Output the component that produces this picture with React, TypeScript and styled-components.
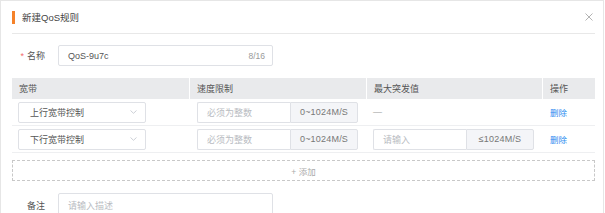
import React from 'react';
import styled, { createGlobalStyle } from 'styled-components';

const GlobalStyle = createGlobalStyle`
  html, body {
    margin: 0;
    padding: 0;
    background: #fff;
  }
  body {
    font-family: "Liberation Sans", "Noto Sans CJK SC", sans-serif;
    font-size: 9px;
    color: #555;
    overflow: hidden;
  }
`;

const Dialog = styled.div`
  width: 602px;
  height: 212px;
  overflow: hidden;
  border: 1px solid #e6e6e6;
  border-bottom: none;
  background: #fff;
  box-sizing: content-box;
`;

const Header = styled.div`
  position: relative;
  display: flex;
  align-items: center;
  height: 32px;
  margin: 0 8px 0 11px;
  border-bottom: 1px solid #e8e8e8;
`;

const TitleBar = styled.span`
  width: 3px;
  height: 13px;
  background: #f5822a;
  margin-right: 7px;
`;

const Title = styled.span`
  font-size: 9.5px;
  color: #444;
`;

const Close = styled.svg`
  position: absolute;
  right: 2px;
  top: 12px;
`;

const Body = styled.div`
  padding: 0 8px 0 11px;
`;

const FormRow = styled.div<{ $top: number }>`
  display: flex;
  align-items: center;
  margin-top: ${p => p.$top}px;
`;

const Label = styled.div`
  width: 46px;
  padding-right: 13px;
  box-sizing: border-box;
  text-align: right;
  color: #555;
  flex-shrink: 0;
  font-size: 9px;
`;

const Required = styled.span`
  color: #f56c6c;
  margin-right: 3px;
`;

const TextBox = styled.div<{ $width: number; $height?: number }>`
  display: flex;
  align-items: center;
  justify-content: space-between;
  width: ${p => p.$width}px;
  height: ${p => p.$height ?? 21}px;
  box-sizing: border-box;
  border: 1px solid #dfe1e6;
  border-radius: 2px;
  padding: 0 7px 0 9px;
  background: #fff;
`;

const Value = styled.span`
  color: #555;
`;

const Placeholder = styled.span`
  color: #b9bcc2;
`;

const Counter = styled.span`
  color: #999;
  font-size: 8.5px;
`;

const Table = styled.div`
  margin-top: 12px;
  display: grid;
  grid-template-columns: 177px 177px 176px 1fr;
`;

const HeadCell = styled.div<{ $first?: boolean }>`
  height: 21px;
  display: flex;
  align-items: center;
  padding: 0 7px;
  background: #e9eaec;
  color: #555;
  border-left: ${p => (p.$first ? 'none' : '1px solid #fff')};
`;

const Cell = styled.div<{ $pad: number }>`
  height: 27px;
  display: flex;
  align-items: center;
  padding-left: ${p => p.$pad}px;
  border-bottom: 1px solid #eeeff1;
  box-sizing: border-box;
`;

const Select = styled.div`
  display: flex;
  align-items: center;
  justify-content: space-between;
  width: 128px;
  height: 21px;
  box-sizing: border-box;
  border: 1px solid #dfe1e6;
  border-radius: 2px;
  padding: 0 8px 0 11px;
  color: #555;
`;

const Group = styled.div`
  display: flex;
  height: 21px;
  width: 161px;
`;

const GroupInput = styled.div`
  flex: 1;
  display: flex;
  align-items: center;
  padding-left: 9px;
  border: 1px solid #dfe1e6;
  border-right: none;
  border-radius: 2px 0 0 2px;
  color: #b9bcc2;
`;

const Addon = styled.div`
  width: 66px;
  display: flex;
  align-items: center;
  justify-content: center;
  background: #f4f5f8;
  border: 1px solid #dfe1e6;
  border-radius: 0 2px 2px 0;
  color: #777;
  letter-spacing: 0.2px;
`;

const Dash = styled.span`
  color: #999;
`;

const Link = styled.a`
  color: #2d8cf0;
  font-size: 8.5px;
  cursor: pointer;
`;

const AddButton = styled.div`
  margin-top: 7px;
  height: 21px;
  box-sizing: border-box;
  border: 1px dashed #c8c8c8;
  display: flex;
  align-items: center;
  justify-content: center;
  color: #aaa;
  font-size: 8.5px;
`;

const Chevron = () => (
  <svg width="7" height="4" viewBox="0 0 7 4">
    <path d="M0.5 0.5 L3.5 3.3 L6.5 0.5" fill="none" stroke="#c0c4cc" strokeWidth="0.8" />
  </svg>
);

type Row = {
  direction: string;
  burst: boolean;
};

const rows: Row[] = [
  { direction: '上行宽带控制', burst: false },
  { direction: '下行宽带控制', burst: true },
];

export default function App() {
  return (
    <>
      <GlobalStyle />
      <Dialog>
        <Header>
          <TitleBar />
          <Title>新建QoS规则</Title>
          <Close width="8" height="8" viewBox="0 0 8 8">
            <path d="M0.5 0.5 L7.5 7.5 M7.5 0.5 L0.5 7.5" stroke="#aaa" strokeWidth="0.9" />
          </Close>
        </Header>
        <Body>
          <FormRow $top={11}>
            <Label>
              <Required>*</Required>名称
            </Label>
            <TextBox $width={215}>
              <Value>QoS-9u7c</Value>
              <Counter>8/16</Counter>
            </TextBox>
          </FormRow>

          <Table>
            <HeadCell $first>宽带</HeadCell>
            <HeadCell>速度限制</HeadCell>
            <HeadCell>最大突发值</HeadCell>
            <HeadCell>操作</HeadCell>
            {rows.map((r, i) => (
              <React.Fragment key={i}>
                <Cell $pad={6}>
                  <Select>
                    <span>{r.direction}</span>
                    <Chevron />
                  </Select>
                </Cell>
                <Cell $pad={8}>
                  <Group>
                    <GroupInput>必须为整数</GroupInput>
                    <Addon>0~1024M/S</Addon>
                  </Group>
                </Cell>
                <Cell $pad={7}>
                  {r.burst ? (
                    <Group>
                      <GroupInput>请输入</GroupInput>
                      <Addon>≤1024M/S</Addon>
                    </Group>
                  ) : (
                    <Dash>—</Dash>
                  )}
                </Cell>
                <Cell $pad={8}>
                  <Link>删除</Link>
                </Cell>
              </React.Fragment>
            ))}
          </Table>

          <AddButton>+ 添加</AddButton>

          <FormRow $top={12}>
            <Label>备注</Label>
            <TextBox $width={215} $height={24}>
              <Placeholder>请输入描述</Placeholder>
            </TextBox>
          </FormRow>
        </Body>
      </Dialog>
    </>
  );
}
